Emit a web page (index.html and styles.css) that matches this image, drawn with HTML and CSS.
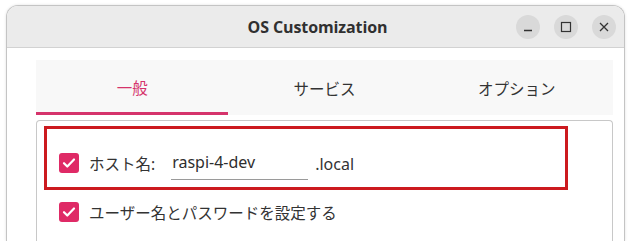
FILE: index.html
```html
<!DOCTYPE html>
<html lang="ja">
<head>
<meta charset="utf-8">
<title>OS Customization</title>
<link rel="stylesheet" href="styles.css">
</head>
<body>
<div class="window">
  <header class="titlebar">
    <div class="title">OS Customization</div>
    <div class="controls">
      <button class="ctl" aria-label="minimize"><svg width="12" height="12" viewBox="0 0 12 12"><path d="M2 9.5h8" stroke="#333" stroke-width="1.3"/></svg></button>
      <button class="ctl" aria-label="maximize"><svg width="12" height="12" viewBox="0 0 12 12"><rect x="1.5" y="1.5" width="9" height="9" fill="none" stroke="#333" stroke-width="1.2"/></svg></button>
      <button class="ctl" aria-label="close"><svg width="12" height="12" viewBox="0 0 12 12"><path d="M2 2l8 8M10 2l-8 8" stroke="#333" stroke-width="1.3"/></svg></button>
    </div>
  </header>
  <main class="body">
    <nav class="tabs">
      <div class="tab active">一般</div>
      <div class="tab">サービス</div>
      <div class="tab">オプション</div>
    </nav>
    <section class="panel">
      <div class="highlight"></div>
      <div class="row first">
        <span class="check"><svg width="14" height="12" viewBox="0 0 14 12"><path d="M2 6.2l3.3 3.3L12 2.5" fill="none" stroke="#fff" stroke-width="2.2" stroke-linecap="round" stroke-linejoin="round"/></svg></span>
        <span class="label">ホスト名:</span>
        <span class="input">raspi-4-dev</span>
        <span class="suffix">.local</span>
      </div>
      <div class="row">
        <span class="check"><svg width="14" height="12" viewBox="0 0 14 12"><path d="M2 6.2l3.3 3.3L12 2.5" fill="none" stroke="#fff" stroke-width="2.2" stroke-linecap="round" stroke-linejoin="round"/></svg></span>
        <span class="label">ユーザー名とパスワードを設定する</span>
      </div>
    </section>
  </main>
</div>
</body>
</html>
```
FILE: styles.css
```css
html, body {
  margin: 0;
  padding: 0;
  background: #ffffff;
  overflow: hidden;
  height: 241px;
}
body {
  box-sizing: border-box;
  padding: 5px 0 0 6px;
  font-family: "Noto Sans", "Noto Sans CJK JP", sans-serif;
  color: #2e2e2e;
}
.window {
  box-sizing: border-box;
  width: 619px;
  height: 236px;
  border: 1px solid #c4c4c4;
  border-bottom: none;
  border-radius: 12px 12px 0 0;
  background: #ffffff;
  overflow: hidden;
  box-shadow: 0 0 3px rgba(0,0,0,0.12);
  display: flex;
  flex-direction: column;
}
.titlebar {
  position: relative;
  flex: none;
  height: 41px;
  background: #ebebeb;
  border-bottom: 1px solid #d2d2d2;
  display: flex;
  align-items: center;
  justify-content: center;
}
.title {
  font-family: "Open Sans", "Noto Sans", sans-serif;
  font-weight: 700;
  font-size: 16px;
  color: #303030;
  letter-spacing: -0.1px;
  margin-left: 4px;
}
.controls {
  position: absolute;
  right: 8px;
  top: 9px;
  display: flex;
  gap: 14px;
}
.ctl {
  width: 24px;
  height: 24px;
  border-radius: 50%;
  border: none;
  padding: 0;
  background: #d9d9d9;
  display: flex;
  align-items: center;
  justify-content: center;
}
.body {
  flex: 1;
  display: flex;
  flex-direction: column;
  padding: 12px 11px 0 29px;
}
.tabs {
  flex: none;
  display: flex;
  background: #f8f8f8;
  height: 55px;
}
.tab {
  flex: 1;
  display: flex;
  align-items: center;
  justify-content: center;
  font-size: 15.5px;
  color: #333;
  box-sizing: border-box;
  padding-top: 2px;
}
.tab.active {
  color: #d5336b;
  border-bottom: 3px solid #d5336b;
}
.panel {
  position: relative;
  flex: 1;
  margin-top: 5px;
  border: 1px solid #c8c8c8;
  border-bottom: none;
  border-radius: 4px 4px 0 0;
  padding: 32px 0 0 22px;
}
.highlight {
  position: absolute;
  left: 7px;
  top: 5px;
  width: 518px;
  height: 58px;
  border: 3px solid #cc1a1f;
}
.row {
  display: flex;
  align-items: center;
  height: 20px;
  font-size: 15.5px;
  color: #333;
}
.row + .row {
  margin-top: 29px;
}
.check {
  width: 20px;
  height: 20px;
  border-radius: 3px;
  background: #df2a66;
  display: flex;
  align-items: center;
  justify-content: center;
  margin-right: 10px;
  flex: none;
}
.label {
  white-space: nowrap;
}
.input {
  margin-left: 16px;
  width: 137px;
  box-sizing: border-box;
  padding: 0 0 6px 1px;
  border-bottom: 1px solid #9a9a9a;
  font-size: 16px;
  color: #2e2e2e;
  position: relative;
  top: 2px;
}
.suffix {
  margin-left: 7px;
  font-size: 16px;
  position: relative;
  top: 1px;
}
```
